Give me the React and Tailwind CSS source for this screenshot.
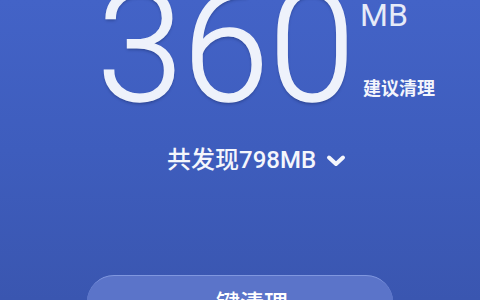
import React from "react";

export default function App() {
  return (
    <div className="w-[480px] h-[300px] overflow-hidden flex flex-col bg-gradient-to-b from-[#4363c7] via-[#3e5dbd] to-[#3a56b0] font-['Roboto','Noto_Sans_CJK_SC',sans-serif] text-white">
      <div className="flex pl-[97px] mt-[-30px] shrink-0">
        <div className="text-[155px] leading-none font-light text-[#eef2fb] [-webkit-text-stroke:1.5px_#eef2fb] [text-shadow:0_2px_3px_rgba(10,20,60,0.35)]">
          360
        </div>
        <div className="flex flex-col ml-[5px] pt-[29px]">
          <div className="text-[32px] leading-none font-normal text-[#e6ebf8]">MB</div>
          <div className="mt-[49px] ml-[3px] text-[18px] leading-none font-bold text-[#f3f5fc]">建议清理</div>
        </div>
      </div>
      <div className="flex items-center pl-[167px] mt-[23px] gap-[10px] shrink-0">
        <span className="text-[24px] leading-none font-medium text-[#f4f6fc]">共发现798MB</span>
        <svg width="20" height="13" viewBox="0 0 20 13" className="mt-[1px]">
          <path d="M3 3.5 L10 10 L17 3.5" fill="none" stroke="#f4f6fc" strokeWidth="4" strokeLinecap="round" strokeLinejoin="round" />
        </svg>
      </div>
      <div className="flex-1" />
      <div className="mx-[87px] mb-[-30px] h-[55px] shrink-0 rounded-[27px] bg-[#5b74c9] border-t border-[#8097df] flex justify-center pt-[16px]">
        <span className="text-[24px] leading-none font-medium text-white">一键清理</span>
      </div>
    </div>
  );
}
